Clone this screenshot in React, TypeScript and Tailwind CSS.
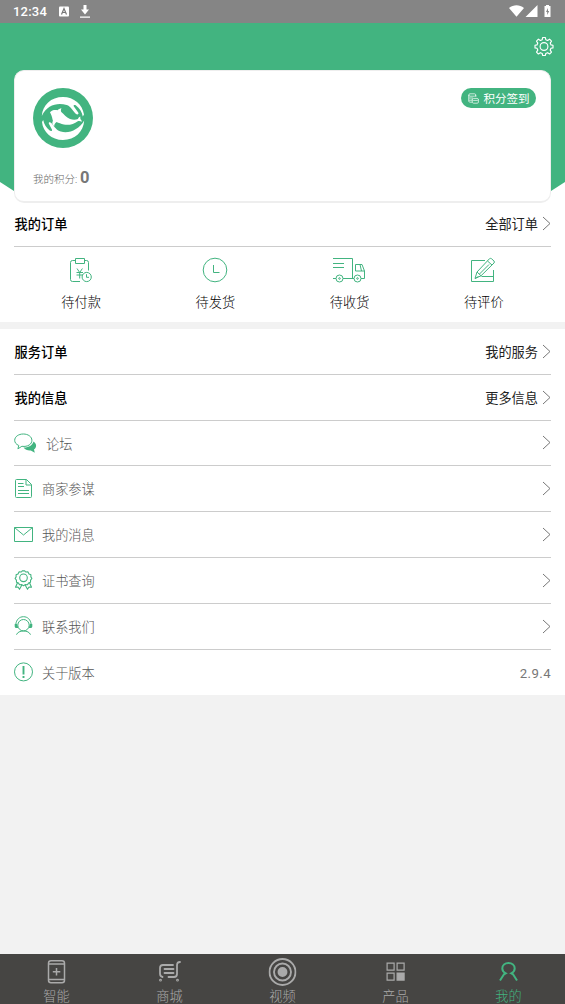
import type { ReactNode } from "react";

const Chevron = () => (
  <svg className="h-[15px] w-[9px] shrink-0" viewBox="0 0 9 15" fill="none" stroke="#777" strokeWidth="1">
    <path d="M1 1l7 6.500L1 14" />
  </svg>
);

const Gear = () => (
  <svg className="size-5 -translate-y-[0.5px]" viewBox="0 0 20 20" fill="none" stroke="#fff" strokeWidth="1.15" strokeLinejoin="round">
    <path d="M8.700 1h2.600l.5 2.200 1.800.8 2-1.300 1.900 1.900-1.300 2 .8 1.800 2 .4v2.600l-2 .4-.8 1.800 1.300 2-1.900 1.900-2-1.300-1.800.8-.5 2h-2.600l-.5-2-1.800-.8-2 1.300-1.900-1.900 1.300-2-.8-1.800-2-.4V8.800l2-.4.8-1.800-1.300-2 1.900-1.900 2 1.300 1.800-.8z" />
    <circle cx="10" cy="10" r="3.900" />
  </svg>
);

const Whale = () => (
  <svg className="size-[60px]" viewBox="0 0 60 60">
    <circle cx="30" cy="30" r="30" fill="#42b480" />
    <g fill="#fff">
      <path d="M8.800 28C9.500 17 18 9 30 9c11 0 19.500 7.500 21 17.500l-1.200 2C49 24 46.500 20 43 17.500c-1.300-.8-2.700-.5-2.300.8l4.500 6.200c1 2-1 2.500-2.500 1.200-3-3-5-7.500-9-8.700C24 14.300 14 17 8.800 28z" />
      <path d="M51.200 32.500C50.500 43.500 42 52 30 52 18.500 52 10 44 9 34l1.200-2c.8 4 3 8 6.500 10.500 1.300.8 2.700.5 2.300-.8l-3-5.700c-1-2 1-2.500 2.300-1 3 3.500 5 7.300 9.500 8.600 8.700 2.200 18.200-2.100 23.400-11.100z" />
      <path d="M17 24.300c2-2.300 4.700-2.500 7.500-2 1-1 2.300-2 4-2-.8 1.500-.7 2.700-.2 3.700 2.700 2 4.700 5.500 8.700 7 2.500.8 5.500 1 8 0 .3-1.300 1-2 2.300-2.500 0 1.200-.1 2 .2 2.700.8.500 1.200 1.500 1.300 2.500-1.500-.7-2.800-.7-4-.5-4 3-9 4.300-14 3.300-2.800-.6-5-1.700-7.300-2.500-1.500 1.200-2.500 2.700-2.200 4.500-2-1.300-2.500-3.400-1.400-5.700-.6-2-.7-4.500-2.900-8.500z" />
    </g>
  </svg>
);

const Coins = () => (
  <svg className="h-[11px] w-[11px]" viewBox="0 0 11 11" fill="none" stroke="#fff" strokeWidth=".7">
    <path d="M2 .8h4.500q1.300.2 1.300 1.200T6.500 3.200H2Q.7 3 .7 2T2 .8zM.7 2v6.200q.2 1 1.500 1H4M7.800 2v2M1 5h4M1 7.200h3" />
    <path d="M5.500 5.400h3.700q1.200.2 1.200 1t-1.200 1H5.500q-1.200-.2-1.200-1t1.200-1zM4.300 6.500v2.700q.2 1 1.200 1h3.700q1.200 0 1.200-1V6.500" />
  </svg>
);

const orders: { label: string; icon: ReactNode }[] = [
  {
    label: "待付款",
    icon: (
      <svg className="h-[26px] w-[24px]" viewBox="0 0 24 26" fill="none" stroke="#42b480" strokeWidth="1">
        <path d="M6.500 3.500H3.500Q1.500 3.500 1.500 5.500v17q0 2 2 2H11M15.500 3.500h2q2 0 2 2v8M6.500 1.500h9v5h-9zM8 11.500l2.700 4 2.700-4M7.500 15.500H14M7.500 18H14M10.700 15.500v6" />
        <circle cx="17.700" cy="20" r="4.600" />
        <path d="M17.500 17.200v3.100h2.500" />
      </svg>
    ),
  },
  {
    label: "待发货",
    icon: (
      <svg className="h-[26px] w-[26px]" viewBox="0 0 26 26" fill="none" stroke="#42b480" strokeWidth="1">
        <circle cx="13" cy="13" r="11.800" />
        <path d="M11.500 8v7.500h6" />
      </svg>
    ),
  },
  {
    label: "待收货",
    icon: (
      <svg className="h-[26px] w-[34px] -translate-x-px" viewBox="0 0 34 26" fill="none" stroke="#42b480" strokeWidth="1">
        <path d="M1 1.500h19.500v20M1 6.500h11M1 10.500h11M1 21.500h3M11 21.500h11M29 21.500h3.500V14l-2.500-6.500h-6.500V14h9M28 7.500l1.500 6.500" />
        <circle cx="7.500" cy="21.500" r="3.500" />
        <circle cx="25.500" cy="21.500" r="3.500" />
        <circle cx="7.500" cy="21.500" r=".8" />
        <circle cx="25.500" cy="21.500" r=".8" />
      </svg>
    ),
  },
  {
    label: "待评价",
    icon: (
      <svg className="h-[26px] w-[26px] -translate-x-px" viewBox="0 0 26 26" fill="none" stroke="#42b480" strokeWidth="1">
        <path d="M15 3.500H1.500v21h22V13M11.500 19.500h12M5 21.500l2-6.500L19.500 1.700q1-.7 2 0l2.500 2.300q.8 1 0 2L11 18.800zM17.500 4l4.500 4M7 15l4 3.800M9.500 17l9.500-9.500M5 21.500l3.500-2" />
      </svg>
    ),
  },
];

const menu: { label: string; icon: ReactNode }[] = [
  {
    label: "论坛",
    icon: (
      <svg className="h-[20px] w-[23px]" viewBox="0 0 23 20" fill="none" stroke="#42b480" strokeWidth="1">
        <path d="M19.500 8.500c3.500 2.500 3.300 6 .5 8l.8 3.200-4-2.200c-3 .3-5.800-.8-7.300-3 5 .2 9-2 10-6z" fill="#42b480" stroke="none" />
        <path d="M4.800 12.500C2 11.300.7 9.500.7 7.300.7 3.700 4.500 1 9.300 1s8.600 2.700 8.600 6.300c0 3.800-4 6.800-10 6l-4 2.500z" />
      </svg>
    ),
  },
  {
    label: "商家参谋",
    icon: (
      <svg className="h-[20px] w-[19px]" viewBox="0 0 19 20" fill="none" stroke="#42b480" strokeWidth="1">
        <path d="M2.500.500h10l5 5v12q0 1-1 1h-14q-1 0-1-1v-16q0-1 1-1zM12 .5v5.500h5.500M4 4.500h5.500M4 7.500h6M4 11.500h11M4 14.500h11" />
      </svg>
    ),
  },
  {
    label: "我的消息",
    icon: (
      <svg className="h-[20px] w-[19px]" viewBox="0 0 19 20" fill="none" stroke="#42b480" strokeWidth="1">
        <path d="M.5 2.500h18v14H.5zM.5 2.500l9 7.500 9-7.500" />
      </svg>
    ),
  },
  {
    label: "证书查询",
    icon: (
      <svg className="h-[20px] w-[19px]" viewBox="0 0 19 20" fill="none" stroke="#42b480" strokeWidth="1.100" strokeLinejoin="round">
        <path d="M8.300.9h2.400l1 1.100 2.300-.1 1 2 1.900.9v2.100l1 1.600-1.300 1.600-.1 2.200-2 .8-1 1.700-2.300-.2-1.700 1.200-1.700-1.200-2.300.2-1-1.700-2-.8-.1-2.200-1.300-1.600 1-1.600V4.800L4 3.900l1-2 2.300.1z" />
        <circle cx="9.500" cy="7.800" r="3.800" />
        <path d="M3.500 12.700l-2 4.500 2.500-.2 1.500 2.300L8 14.800M15.500 12.700l2 4.500-2.500-.2-1.500 2.300L11 14.800" />
      </svg>
    ),
  },
  {
    label: "联系我们",
    icon: (
      <svg className="h-[20px] w-[19px]" viewBox="0 0 19 20" fill="none" stroke="#42b480" strokeWidth="1">
        <circle cx="9.500" cy="9.200" r="5.700" />
        <path d="M1.800 8.500C2.300 3.500 5.500.7 9.500.7s7.200 2.800 7.700 7.800M2.500 18.700c1-2.500 3.500-3.700 7-3.700s6 1.200 7 3.700" />
        <path d="M.7 8h2.300l1.300 4H2.500Q.7 12 .7 10.500zM18.300 8H16l-1.300 4h1.800q1.800 0 1.800-1.500z" fill="#42b480" stroke="none" />
      </svg>
    ),
  },
  {
    label: "关于版本",
    icon: (
      <svg className="h-[20px] w-[19px]" viewBox="0 0 19 20" fill="none" stroke="#42b480" strokeWidth="1">
        <circle cx="9.500" cy="9.900" r="9" />
        <path d="M9.500 4v8.500M9.500 14v1.900" strokeWidth="1.900" />
      </svg>
    ),
  },
];

const tabs: { label: string; active?: boolean; icon: ReactNode }[] = [
  {
    label: "智能",
    icon: (
      <svg className="size-7" viewBox="0 0 28 28" fill="none" stroke="currentColor" strokeWidth="1.500">
        <rect x="6" y="2.700" width="16" height="22" rx="2.500" />
        <path d="M6 6h16M6 21.500h16M14 10v7.500M10.300 13.700h7.500" />
      </svg>
    ),
  },
  {
    label: "商城",
    icon: (
      <svg className="size-7" viewBox="0 0 28 28" fill="none" stroke="currentColor" strokeWidth="1.800" strokeLinecap="round">
        <path d="M17.500 7H7.500Q4.500 7 4.500 10v5.500q0 3 2.500 3.500M9 11h9M9 15h9M13 19h5.500q3 0 3-3V7.500Q21.500 4 24.500 4" />
        <circle cx="5" cy="22.200" r=".5" />
        <circle cx="22" cy="22.200" r=".5" />
      </svg>
    ),
  },
  {
    label: "视频",
    icon: (
      <svg className="size-7" viewBox="0 0 28 28" fill="none" stroke="currentColor" strokeWidth="1.900">
        <circle cx="14" cy="14" r="13" />
        <circle cx="14" cy="14" r="8.500" />
        <circle cx="14" cy="14" r="4" fill="currentColor" />
      </svg>
    ),
  },
  {
    label: "产品",
    icon: (
      <svg className="size-7" viewBox="0 0 28 28" fill="none" stroke="currentColor" strokeWidth="1.200">
        <path d="M5.600 5.100h7v7h-7zM15.600 5.100h7v7h-7zM5.600 15.100h7v7h-7z" />
        <path d="M15.600 15.100h7v7h-7z" fill="currentColor" />
      </svg>
    ),
  },
  {
    label: "我的",
    active: true,
    icon: (
      <svg className="size-7" viewBox="0 0 28 28" fill="none" stroke="currentColor" strokeWidth="2">
        <path d="M5.500 22.500l4-6.200 1.700-.9c-2.400-1.200-3.400-2.900-3.400-4.800C7.800 7.300 10.500 5 14 5s6.200 2.300 6.200 5.600c0 1.900-1 3.600-3.400 4.800l1.700.9 4 6.200" />
      </svg>
    ),
  },
];

function SectionRow({ title, link }: { title: string; link: string }) {
  return (
    <div className="mx-[14px] flex h-[45.8px] items-center border-b border-[#ccc] text-black">
      <h2 className="flex-1 pl-[0.6px] pt-[3px] text-[13.2px] font-medium">{title}</h2>
      <span className="mr-[4px] pt-[3px] text-[13.2px] font-normal text-[#222]">{link}</span>
      <Chevron />
    </div>
  );
}

export default function App() {
  return (
    <div className="flex h-[1004px] w-[565px] flex-col overflow-hidden bg-[#f2f2f2] font-['Roboto','Noto_Sans_CJK_SC',sans-serif] font-light">
      <div className="flex h-[23px] shrink-0 items-center bg-[#858585] px-[13px] text-white">
        <span className="w-[46px] text-[13px] font-medium tracking-[0.2px]">12:34</span>
        <svg className="h-[11px] w-[10px]" viewBox="0 0 10 11">
          <rect y=".5" width="10" height="10" rx="1" fill="#fff" />
          <path d="M2.500 8.500L5 2.500l2.500 6M3.500 6.500h3" stroke="#777" strokeWidth="1.200" fill="none" />
        </svg>
        <svg className="ml-[11px] h-[13px] w-[10px]" viewBox="0 0 10 13" fill="#fff">
          <path d="M3.500 0h3v4.500H9L5 9.500 1 4.500h2.500zM0 11.500h10v1.300H0z" />
        </svg>
        <div className="flex-1" />
        <svg className="h-[12px] w-[43px] -translate-y-px" viewBox="0 0 43 12" fill="#fff">
          <path d="M0 3C4.500-.6 10.500-.6 15 3L7.500 11.700zM28.500 0v12H16.500z" />
          <path d="M35.500 1H37V0h3v1h1.500v11h-6z" />
          <path d="M39 3l-2 4h1.200v3l2-4H39z" fill="#858585" />
        </svg>
      </div>

      <header className="grid h-[179px] shrink-0 bg-white">
        <div className="h-[179px] bg-[#42b480] [clip-path:polygon(0_0,100%_0,100%_159px,537px_177px,28px_177px,0_159px)] [grid-area:1/1]" />
        <div className="z-10 flex flex-col [grid-area:1/1]">
          <div className="flex h-[47px] items-center justify-end pr-[11px]">
            <Gear />
          </div>
          <section className="mx-[14px] flex h-[133px] flex-col rounded-[10px] border border-b-2 border-[#eee] bg-white pl-[18px] pr-[14px] pt-[17px]">
            <div className="flex items-start justify-between">
              <Whale />
              <button className="flex h-5 w-[75px] items-center justify-center gap-[5px] rounded-full bg-[#42b480] text-[11.5px] font-normal leading-none text-white">
                <Coins />
                <span className="pt-[3px]">积分签到</span>
              </button>
            </div>
            <div className="mt-[18px] flex items-baseline text-[#666]">
              <span className="w-[47px] whitespace-nowrap text-[10.5px]">我的积分:</span>
              <strong className="text-[16.5px] font-bold leading-6 text-[#777]">0</strong>
            </div>
          </section>
        </div>
      </header>

      <section className="h-[120px] shrink-0 bg-white">
        <div className="-mt-px h-[46px]">
          <SectionRow title="我的订单" link="全部订单" />
        </div>
        <div className="mx-[14px] grid grid-cols-4">
          {orders.map((o) => (
            <div key={o.label} className="flex flex-col items-center pt-[10px]">
              {o.icon}
              <span className="mt-[10px] text-[13.2px] leading-5 text-black">{o.label}</span>
            </div>
          ))}
        </div>
      </section>

      <main className="mt-[7px] h-[366px] shrink-0 bg-white">
        <SectionRow title="服务订单" link="我的服务" />
        <SectionRow title="我的信息" link="更多信息" />
        {menu.map((m, i) => (
          <div
            key={m.label}
            className={`mx-[14px] flex h-[45.8px] items-center text-[13.2px] text-[#555] ${i < 5 ? "border-b border-[#ccc]" : ""}`}
          >
            {m.icon}
            <span className="ml-[9px] flex-1 pt-[3px]">{m.label}</span>
            {i < 5 ? <Chevron /> : <span className="pt-[2px] font-normal tracking-[0.4px] text-[#777]">2.9.4</span>}
          </div>
        ))}
      </main>

      <nav className="mt-auto grid h-[50px] shrink-0 grid-cols-5 bg-[#464543]">
        {tabs.map((t) => (
          <div
            key={t.label}
            className={`flex flex-col items-center pt-[4px] ${t.active ? "text-[#42b480]" : "text-[#aaa]"}`}
          >
            <div className="-translate-x-[0.5px]">{t.icon}</div>
            <span className="text-[13.2px] leading-[21px]">{t.label}</span>
          </div>
        ))}
      </nav>
    </div>
  );
}
